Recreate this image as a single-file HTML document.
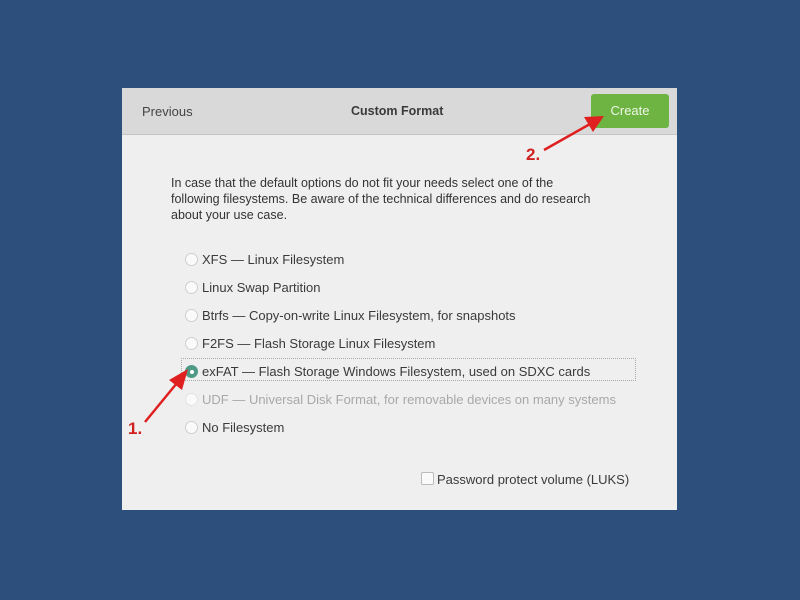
<!DOCTYPE html>
<html><head><style>
body{margin:0;width:800px;height:600px;background:#2d4f7b;font-family:"Liberation Sans",sans-serif;position:relative;overflow:hidden}
.dlg{position:absolute;left:122px;top:88px;width:555px;height:422px;background:#efefef;}
.hdr{position:absolute;left:0;top:0;width:555px;height:46px;background:#d9d9d9;border-bottom:1px solid #c4c4c4}
.t{position:absolute;font-size:13px;color:#3a3a3a;white-space:nowrap}
.btn{position:absolute;left:469px;top:6px;width:78px;height:34px;background:#6db442;border-radius:3px;color:#eef7e6;font-size:13px;text-align:center;line-height:34px}
.r{position:absolute;left:63px;width:13px;height:13px;border-radius:50%;background:#fafafa;border:1px solid #cfcfcf;box-sizing:border-box}
.p{font-size:12.5px;line-height:16px;color:#333}
</style></head><body>
<div class="dlg">
 <div class="hdr">
  <div class="t" style="left:20px;top:16px;color:#444">Previous</div>
  <div class="t" style="left:229px;top:16px;font-weight:bold;font-size:12.5px">Custom Format</div>
  <div class="btn">Create</div>
 </div>
 <div class="t p" style="left:49px;top:87px;white-space:normal;width:430px">In case that the default options do not fit your needs select one of the following filesystems. Be aware of the technical differences and do research about your use case.</div>
 <div style="position:absolute;left:59px;top:270px;width:455px;height:23px;border:1px dotted #aaa;box-sizing:border-box"></div>
 <div class="r" style="top:165px"></div><div class="t" style="left:80px;top:164px">XFS — Linux Filesystem</div>
 <div class="r" style="top:193px"></div><div class="t" style="left:80px;top:192px">Linux Swap Partition</div>
 <div class="r" style="top:221px"></div><div class="t" style="left:80px;top:220px">Btrfs — Copy-on-write Linux Filesystem, for snapshots</div>
 <div class="r" style="top:249px"></div><div class="t" style="left:80px;top:248px">F2FS — Flash Storage Linux Filesystem</div>
 <div class="r" style="top:277px;background:#4f9a86;border-color:#4f9a86"><div style="position:absolute;left:3.5px;top:3.5px;width:4px;height:4px;border-radius:50%;background:#fff"></div></div><div class="t" style="left:80px;top:276px">exFAT — Flash Storage Windows Filesystem, used on SDXC cards</div>
 <div class="r" style="top:305px;border-color:#e3e3e3"></div><div class="t" style="left:80px;top:304px;color:#a8a8a8">UDF — Universal Disk Format, for removable devices on many systems</div>
 <div class="r" style="top:333px"></div><div class="t" style="left:80px;top:332px">No Filesystem</div>
 <div style="position:absolute;left:299px;top:384px;width:13px;height:13px;background:#fafafa;border:1px solid #bbb;box-sizing:border-box;border-radius:2px"></div>
 <div class="t" style="left:315px;top:384px">Password protect volume (LUKS)</div>
</div>
<svg width="800" height="600" style="position:absolute;left:0;top:0">
 <line x1="544" y1="150" x2="590" y2="124" stroke="#e02020" stroke-width="2.5"/>
 <polygon points="604,116 584,117 593,132" fill="#e02020"/>
 <line x1="145" y1="422" x2="177" y2="383" stroke="#e02020" stroke-width="2.5"/>
 <polygon points="188,369 169,380 182,390" fill="#e02020"/>
 <text x="526" y="160" fill="#d02020" font-family="Liberation Sans" font-weight="bold" font-size="17">2.</text>
 <text x="128" y="434" fill="#d02020" font-family="Liberation Sans" font-weight="bold" font-size="17">1.</text>
</svg>
</body></html>
